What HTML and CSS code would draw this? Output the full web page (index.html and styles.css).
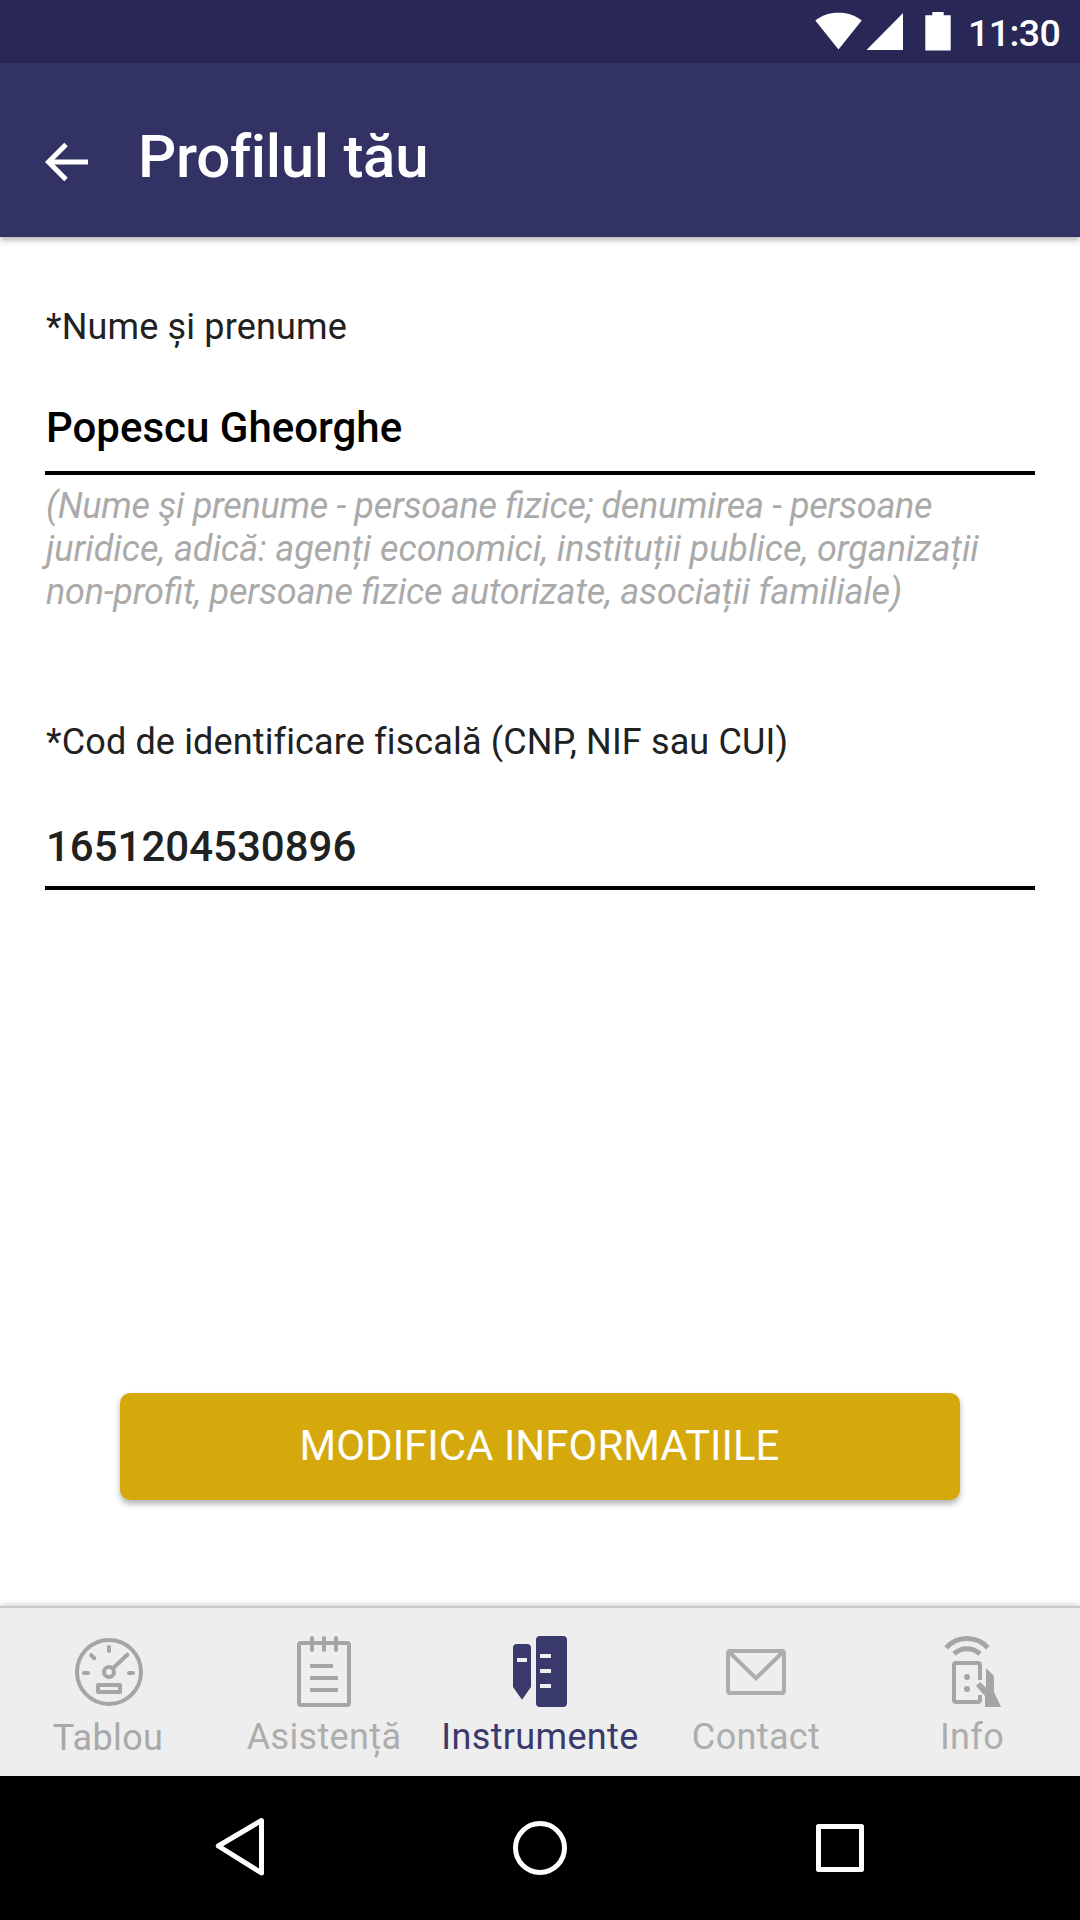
FILE: index.html
```html
<!DOCTYPE html>
<html lang="ro">
<head>
<meta charset="utf-8">
<title>Profilul tău</title>
<link rel="stylesheet" href="styles.css">
</head>
<body>
<div class="screen">
  <div class="status-bar">
    <svg class="status-icons" width="140" height="63" viewBox="0 0 140 63" fill="#fff">
      <path d="M3.3 20.5C9.5 15.3 17.500 12.700 26.500 12.700S43.500 15.300 49.700 20.500L26.500 49.500Z"/>
      <path d="M54.500 50H91V13Z"/>
      <path d="M113.300 15.200H120.300V12H131.700V15.200H138.700V50.500H113.300Z"/>
    </svg>
    <span class="clock">11:30</span>
  </div>
  <header class="app-bar">
    <svg class="back" width="44" height="40" viewBox="0 0 44 40" fill="none" stroke="#fff" stroke-width="5">
      <path d="M43 20H5M21 2.500L3.500 20L21 37.500"/>
    </svg>
    <h1 class="title">Profilul tău</h1>
  </header>
  <main class="content">
    <section class="field field-name">
      <label class="label">*Nume și prenume</label>
      <div class="value value-name">Popescu Gheorghe</div>
      <p class="hint"><span class="hint-line tight">(Nume şi prenume - persoane fizice; denumirea - persoane</span><span class="hint-line">juridice, adică: agenți economici, instituții publice, organizații</span><span class="hint-line snug">non-profit, persoane fizice autorizate, asociații familiale)</span></p>
    </section>
    <section class="field">
      <label class="label label-code">*Cod de identificare fiscală (CNP, NIF sau CUI)</label>
      <div class="value value-code">1651204530896</div>
    </section>
    <button class="submit">MODIFICA INFORMATIILE</button>
  </main>
  <nav class="tabs">
    <a class="tab tab-dash">
      <svg width="80" height="80" viewBox="0 0 80 80" fill="none" stroke="currentColor" stroke-width="4" stroke-linecap="round" stroke-linejoin="round">
        <circle cx="41" cy="40" r="32"/>
        <circle cx="41" cy="40" r="5"/>
        <path d="M41 15V19M16 41H20M61 41H65M23.200 23.200L26.300 26.300M59.300 22.700L45.500 35.800"/>
        <rect x="30" y="53" width="22" height="7"/>
      </svg>
      <span>Tablou</span>
    </a>
    <a class="tab">
      <svg width="80" height="80" viewBox="0 0 80 80" fill="none" stroke="currentColor" stroke-width="4">
        <rect x="15" y="11" width="50" height="62" rx="2"/>
        <path stroke-linecap="round" d="M28 6V18M40 6V18M52 6V18"/>
        <path d="M26 34H49M26 46H54M26 58H54"/>
      </svg>
      <span>Asistență</span>
    </a>
    <a class="tab tab-active">
      <svg width="80" height="80" viewBox="0 0 80 80" fill="currentColor" fill-rule="evenodd">
        <path d="M17 12H27Q31 12 31 16V55L22 67.800L13 55V16Q13 12 17 12ZM17 26V30H27V26Z"/>
        <path d="M40 4H63Q67 4 67 8V71Q67 75 63 75H40Q36 75 36 71V8Q36 4 40 4ZM40 22V26H51V22ZM40 37V41H51V37ZM40 52V56H51V52Z"/>
      </svg>
      <span>Instrumente</span>
    </a>
    <a class="tab tab-light">
      <svg width="80" height="80" viewBox="0 0 80 80" fill="none" stroke="currentColor" stroke-width="4">
        <rect x="12" y="19" width="56" height="42" rx="2"/>
        <path d="M12.500 19.500L40 46.200L67.500 19.500"/>
      </svg>
      <span>Contact</span>
    </a>
    <a class="tab">
      <svg width="80" height="80" viewBox="0 0 80 80" fill="none" stroke="currentColor" stroke-width="4">
        <path stroke-width="5" d="M14.200 15.800A28 28 0 0 1 55.800 15.800M22 21.800A19.400 19.400 0 0 1 48 21.800"/>
        <path d="M48 48V33Q48 31 46 31H24Q22 31 22 33V68Q22 70 24 70H46Q48 70 48 68V63"/>
        <g fill="currentColor" stroke="none">
          <circle cx="35" cy="45" r="3"/>
          <circle cx="35" cy="57" r="3"/>
          <path d="M54 36L62 44V60L69 75H53V64L44 54L48 50L54 55.500Z"/>
        </g>
      </svg>
      <span>Info</span>
    </a>
  </nav>
  <div class="system-nav">
    <svg width="60" height="64" viewBox="0 0 60 64"><path d="M8.300 30L51.500 4.500V57Z"/></svg>
    <svg width="60" height="64" viewBox="0 0 60 64"><circle cx="30" cy="32" r="24.500"/></svg>
    <svg width="60" height="64" viewBox="0 0 60 64"><rect x="8.500" y="10.500" width="43" height="43"/></svg>
  </div>
</div>
</body>
</html>
```

FILE: styles.css
```css
* {
  box-sizing: border-box;
}

body {
  margin: 0;
  background: #fff;
  font-family: Roboto, "Noto Sans", sans-serif;
}

.screen {
  display: flex;
  flex-direction: column;
  width: 1080px;
  height: 1920px;
  overflow: hidden;
  background: #fff;
}

.status-bar {
  display: flex;
  flex: none;
  justify-content: flex-end;
  height: 63px;
  padding-right: 20px;
  background: #282756;
  color: #fff;
}

.clock {
  width: 92px;
  margin-left: 16px;
  font-size: 37.5px;
  font-weight: 500;
  letter-spacing: -0.6px;
  line-height: 66px;
  white-space: nowrap;
}

.app-bar {
  display: flex;
  flex: none;
  align-items: flex-start;
  height: 174px;
  padding: 58px 45px 0;
  background: #333265;
  box-shadow: 0 3px 6px rgba(0, 0, 0, 0.3);
}

.back {
  margin-top: 21px;
}

.title {
  margin: 0 0 0 49px;
  color: #fff;
  font-size: 60px;
  font-variant-ligatures: none;
  font-weight: 500;
  letter-spacing: -0.3px;
  line-height: 72px;
}

.content {
  display: flex;
  flex: 1;
  flex-direction: column;
  padding: 0 45px;
}

.field-name {
  height: 415px;
}

.label {
  display: block;
  padding: 69px 0 0 1px;
  color: #212121;
  font-size: 36px;
  font-variant-ligatures: none;
  letter-spacing: 0.16px;
  line-height: 43px;
}

.label-code {
  letter-spacing: 0.14px;
}

.value {
  height: 126px;
  padding: 54px 0 0 1px;
  border-bottom: 4px solid #000;
  font-size: 42px;
  font-weight: 500;
  line-height: 50px;
}

.value-name {
  color: #000;
}

.value-code {
  padding-top: 58px;
  color: #212121;
}

.hint {
  margin: 10px 0 0 1px;
  color: #aaa;
  font-feature-settings: "liga" 1, "locl" 0;
  font-size: 36px;
  font-style: italic;
  line-height: 43px;
  white-space: nowrap;
}

.hint-line {
  display: block;
  letter-spacing: -0.07px;
}

.tight {
  letter-spacing: -0.3px;
}

.snug {
  letter-spacing: -0.19px;
}

.submit {
  width: 840px;
  height: 107px;
  margin: auto auto 106px;
  padding: 0 1px 2px 0;
  border: 0;
  border-radius: 10px;
  background: #d5a90b;
  box-shadow: 0 4px 6px rgba(0, 0, 0, 0.3);
  color: #fff;
  font-family: inherit;
  font-size: 42px;
}

.tabs {
  display: grid;
  flex: none;
  grid-template-columns: repeat(5, 1fr);
  height: 170px;
  border-top: 2px solid #c8c8c8;
  background: #eee;
  box-shadow: 0 -1px 6px rgba(0, 0, 0, 0.2);
}

.tab {
  display: flex;
  flex-direction: column;
  align-items: center;
  padding-top: 24px;
  color: #a5a5a5;
}

.tab span {
  margin-top: 4px;
  color: #adadad;
  font-size: 36px;
  letter-spacing: 0.35px;
  line-height: 43px;
}

.tab-dash span {
  margin-top: 5px;
  color: #a8a8a8;
}

.tab-light {
  color: #adadad;
}

.tab-active,
.tab-active span {
  color: #3a396b;
}

.system-nav {
  display: flex;
  flex: none;
  justify-content: space-between;
  height: 144px;
  padding: 40px 210px 0;
  background: #000;
}

.system-nav svg {
  fill: none;
  stroke: #fff;
  stroke-linejoin: round;
  stroke-width: 5;
}
```
